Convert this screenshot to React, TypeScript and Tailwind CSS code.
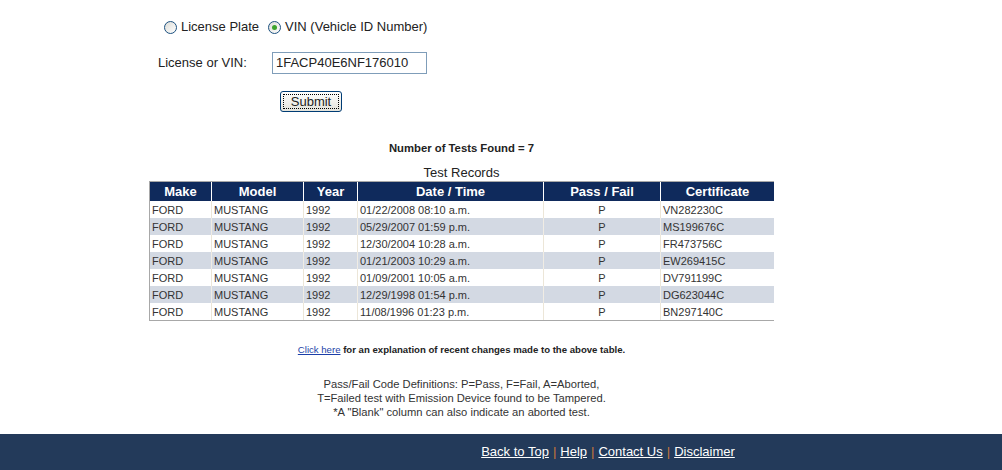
import React from 'react'

const records = [
  { date: '01/22/2008 08:10 a.m.', cert: 'VN282230C' },
  { date: '05/29/2007 01:59 p.m.', cert: 'MS199676C' },
  { date: '12/30/2004 10:28 a.m.', cert: 'FR473756C' },
  { date: '01/21/2003 10:29 a.m.', cert: 'EW269415C' },
  { date: '01/09/2001 10:05 a.m.', cert: 'DV791199C' },
  { date: '12/29/1998 01:54 p.m.', cert: 'DG623044C' },
  { date: '11/08/1996 01:23 p.m.', cert: 'BN297140C' },
]

const cols = 'grid grid-cols-[61px_91px_53px_185px_116px_113px] gap-x-px'

function Radio({ checked }: { checked?: boolean }) {
  return (
    <span className="inline-flex w-[13px] h-[13px] rounded-full border border-[#1c5180] bg-gradient-to-br from-[#dcdcd7] to-white items-center justify-center mr-[4px]">
      {checked && <span className="w-[5px] h-[5px] rounded-full bg-[#3ca32c]" />}
    </span>
  )
}

export default function App() {
  return (
    <div className="w-[1002px] h-[470px] bg-white font-['Liberation_Sans',Arial,sans-serif] text-[#222] flex flex-col overflow-hidden">
      <div className="w-[923px] flex flex-col flex-1">
        {/* search form */}
        <div className="flex items-center pl-[164px] pt-[19px] text-[13px] leading-[16px]">
          <Radio />
          <span>License Plate</span>
          <span className="ml-[9px]" />
          <Radio checked />
          <span>VIN (Vehicle ID Number)</span>
        </div>

        <div className="flex items-center pl-[158px] mt-[17px] text-[13px]">
          <span className="w-[114px]">License or VIN:</span>
          <div className="w-[155px] h-[22px] border border-[#7f9db9] flex items-center px-[3px] text-[13px]">
            1FACP40E6NF176010
          </div>
        </div>

        <div className="pl-[280px] mt-[15px]">
          <button className="w-[62px] h-[21px] rounded-[3px] border border-[#003c74] bg-gradient-to-b from-white to-[#e3e3db] text-[13px] leading-none p-[2px]">
            <span className="flex w-full h-full items-center justify-center border border-dotted border-black">Submit</span>
          </button>
        </div>

        {/* results */}
        <div className="flex flex-col items-center">
          <div className="mt-[28px] text-[11.3px] font-bold leading-[14px]">Number of Tests Found = 7</div>
          <div className="mt-[10px] text-[13px] leading-[15px]">Test Records</div>

          <div className="mt-px w-[625px] border border-[#a8a8a8] bg-[#ece6d8] text-[11px] text-[#333]">
            <div className={`${cols} bg-white h-[19px] border-b border-white`}>
              {['Make', 'Model', 'Year', 'Date / Time', 'Pass / Fail', 'Certificate'].map((h) => (
                <div key={h} className="bg-[#0f2a5c] text-white font-bold text-[13px] flex items-center justify-center">
                  {h}
                </div>
              ))}
            </div>
            {records.map((r, i) => (
              <div
                key={r.cert}
                className={`${cols} grid-rows-[17px] h-[17px] leading-[18px] ${i % 2 ? 'bg-[#f0ece4]' : 'bg-[#ece6d8]'}`}
              >
                {['FORD', 'MUSTANG', '1992', r.date].map((c, j) => (
                  <div key={j} className={`${i % 2 ? 'bg-[#d3d9e3]' : 'bg-white'} pl-[2px]`}>
                    {c}
                  </div>
                ))}
                <div className={`${i % 2 ? 'bg-[#d3d9e3]' : 'bg-white'} text-center`}>P</div>
                <div className={`${i % 2 ? 'bg-[#d3d9e3]' : 'bg-white'} pl-[2px]`}>{r.cert}</div>
              </div>
            ))}
          </div>

          <div className="mt-[22px] text-[9.6px] font-bold leading-[14px]">
            <a href="#" className="text-[#1c3fa8] underline font-normal">Click here</a> for an explanation of recent changes made to the above table.
          </div>

          <div className="mt-[20px] text-[11.2px] leading-[14px] text-center text-[#333]">
            Pass/Fail Code Definitions: P=Pass, F=Fail, A=Aborted,
            <br />
            T=Failed test with Emission Device found to be Tampered.
            <br />
            *A "Blank" column can also indicate an aborted test.
          </div>
        </div>
      </div>

      {/* footer */}
      <footer className="h-[36px] bg-[#233a5a] flex items-center justify-center pl-[214px] text-[13px] text-white">
        <a href="#" className="underline">Back to Top</a>
        <span className="text-[#c8773a] mx-[4px]">|</span>
        <a href="#" className="underline">Help</a>
        <span className="text-[#c8773a] mx-[4px]">|</span>
        <a href="#" className="underline">Contact Us</a>
        <span className="text-[#c8773a] mx-[4px]">|</span>
        <a href="#" className="underline">Disclaimer</a>
      </footer>
    </div>
  )
}
